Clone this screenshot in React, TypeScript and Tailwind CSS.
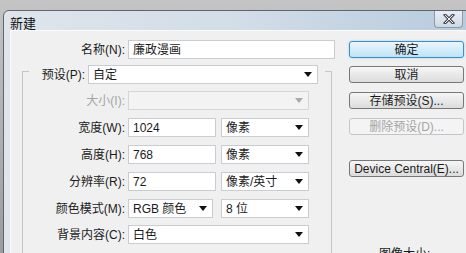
const font = "font-['Liberation_Sans','Noto_Sans_CJK_SC',sans-serif]";

function Arrow({ disabled }: { disabled?: boolean }) {
  return (
    <svg width="8" height="5" viewBox="0 0 8 5" className="shrink-0">
      <path d="M0 0H8L4 5Z" fill={disabled ? "#a9a9a9" : "#111"} />
    </svg>
  );
}

function Select({ value, w, disabled }: { value?: string; w: string; disabled?: boolean }) {
  return (
    <div
      className={`${w} h-[19px] flex items-center justify-between pl-[4px] pr-[5px] border ${
        disabled ? "bg-[#f3f3f3] border-[#d6d6d6]" : "bg-white border-[#c9ccd1]"
      }`}
    >
      <span className="text-[12px] text-[#1b1b1b] leading-none">{value}</span>
      <Arrow disabled={disabled} />
    </div>
  );
}

function Input({ value, w }: { value: string; w: string }) {
  return (
    <div className={`${w} h-[19px] flex items-center pl-[4px] bg-white border border-[#c9ccd1]`}>
      <span className="text-[12px] text-[#1b1b1b] leading-none">{value}</span>
    </div>
  );
}

function Label({ text, disabled }: { text: string; disabled?: boolean }) {
  return (
    <div className={`w-[105px] pr-[3px] text-right text-[12px] leading-none ${disabled ? "text-[#a6a6a6]" : "text-[#1b1b1b]"}`}>
      {text}
    </div>
  );
}

function Button({ text, primary, disabled }: { text: string; primary?: boolean; disabled?: boolean }) {
  const look = primary
    ? "border-[#3c8fc4] bg-gradient-to-b from-[#eaf6fd] to-[#bfe3f7] shadow-[0_0_2px_#7fc6ee]"
    : disabled
    ? "border-[#c3c6c9] bg-[#f4f4f4] text-[#a4a4a4]"
    : "border-[#777] bg-gradient-to-b from-[#f6f6f6] to-[#dcdcdc]";
  return (
    <div
      className={`w-[115px] h-[17px] rounded-[3px] border flex items-center justify-center text-[12px] leading-none ${look} ${
        disabled ? "" : "text-[#1b1b1b]"
      }`}
    >
      {text}
    </div>
  );
}

export default function App() {
  const rows = [
    { label: "宽度(W):", input: "1024", unit: "像素" },
    { label: "高度(H):", input: "768", unit: "像素" },
    { label: "分辨率(R):", input: "72", unit: "像素/英寸" },
  ];

  return (
    <div className={`w-[466px] h-[253px] overflow-hidden bg-gradient-to-b from-[#c4c4c4] to-[#9c9c9c] pt-[10px] pl-[3px] ${font}`}>
      <div className="w-[470px] h-[260px] rounded-tl-[6px] border border-[#5d6670] bg-gradient-to-r from-[#dfe5eb] via-[#d2dde8] to-[#b7cbdd] flex flex-col">
        {/* Title bar */}
        <div className="h-[26px] flex justify-between">
          <span className="ml-[6px] mt-[6px] text-[13px] leading-none text-[#111]">新建</span>
          <div className="mr-[9px] w-[29px] h-[17px] rounded-b-[4px] border border-t-0 border-[#8d9aa8] bg-gradient-to-b from-[#e9eef3] to-[#cfd9e3] flex items-center justify-center">
            <svg width="12" height="10" viewBox="0 0 12 10">
              <path d="M2 1L10 9M10 1L2 9" stroke="#4b4f55" strokeWidth="3" strokeLinecap="square" />
              <path d="M2 1L10 9M10 1L2 9" stroke="#eef1f4" strokeWidth="1" />
            </svg>
          </div>
        </div>

        {/* Client area */}
        <div className="ml-[6px] flex-1 bg-[#f0f0f0] border-t border-l border-[#fbfbfb] flex">
          {/* Left column */}
          <div className="w-[324px] flex flex-col pt-[9px]">
            <div className="flex items-center">
              <div className="w-[117px] pr-[3px] text-right text-[12px] leading-none text-[#1b1b1b]">名称(N):</div>
              <Input value="廉政漫画" w="w-[207px]" />
            </div>

            {/* Group box */}
            <div className="ml-[11px] mt-[12px] w-[310px] h-[200px] border-l border-t border-r border-[#c6c6c6] flex flex-col">
              <div className="-mt-[7px] ml-[6px] mr-[6px] bg-[#f0f0f0] flex items-center">
                <div className="w-[59px] pr-[3px] text-right text-[12px] leading-none text-[#1b1b1b]">预设(P):</div>
                <Select value="自定" w="w-[230px]" />
              </div>

              <div className="mt-[7px] flex items-center">
                <Label text="大小(I):" disabled />
                <Select w="w-[181px]" disabled />
              </div>

              {rows.map((r) => (
                <div key={r.label} className="mt-[8px] flex items-center">
                  <Label text={r.label} />
                  <Input value={r.input} w="w-[88px]" />
                  <div className="ml-[5px]">
                    <Select value={r.unit} w="w-[88px]" />
                  </div>
                </div>
              ))}

              <div className="mt-[8px] flex items-center">
                <Label text="颜色模式(M):" />
                <Select value="RGB 颜色" w="w-[85px]" />
                <div className="ml-[8px]">
                  <Select value="8 位" w="w-[88px]" />
                </div>
              </div>

              <div className="mt-[7px] flex items-center">
                <Label text="背景内容(C):" />
                <Select value="白色" w="w-[181px]" />
              </div>
            </div>
          </div>

          {/* Right column */}
          <div className="ml-[14px] pt-[10px] flex flex-col">
            <Button text="确定" primary />
            <div className="mt-[8px]">
              <Button text="取消" />
            </div>
            <div className="mt-[9px]">
              <Button text="存储预设(S)..." />
            </div>
            <div className="mt-[9px]">
              <Button text="删除预设(D)..." disabled />
            </div>
            <div className="mt-[25px]">
              <Button text="Device Central(E)..." />
            </div>
            <div className="mt-[71px] ml-[30px] text-[12px] leading-none text-[#1b1b1b]">图像大小:</div>
          </div>
        </div>
      </div>
    </div>
  );
}
